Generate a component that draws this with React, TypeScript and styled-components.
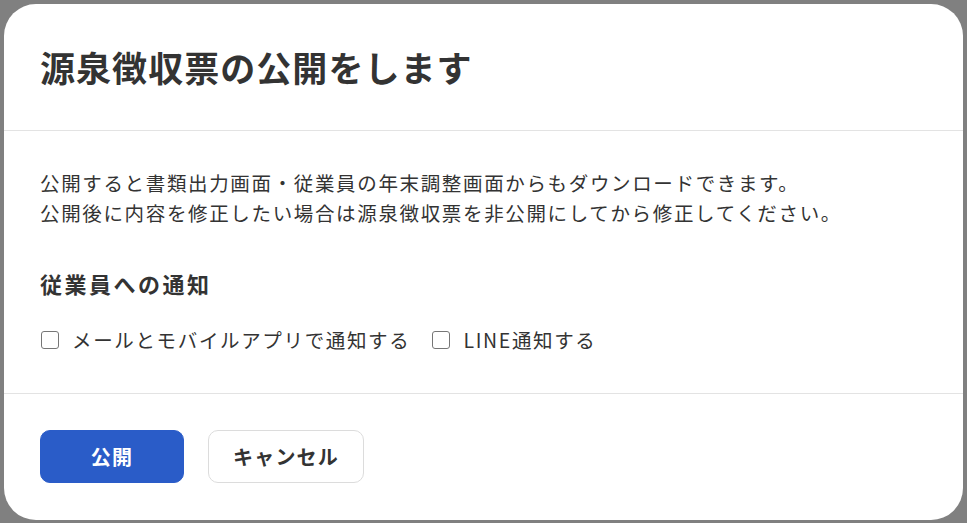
import React, { useState } from "react";
import styled, { createGlobalStyle } from "styled-components";

const GlobalStyle = createGlobalStyle`
  html, body {
    margin: 0;
    padding: 0;
    background: #808080;
  }
  body {
    font-family: "Noto Sans CJK JP", "Noto Sans", sans-serif;
    color: #333;
  }
`;

const App = () => {
  const [mail, setMail] = useState(false);
  const [line, setLine] = useState(false);
  return (
    <>
      <GlobalStyle />
      <Overlay>
        <Modal>
          <Header>
            <Title>源泉徴収票の公開をします</Title>
          </Header>
          <Body>
            <Description>
              公開すると書類出力画面・従業員の年末調整画面からもダウンロードできます。
              <br />
              公開後に内容を修正したい場合は源泉徴収票を非公開にしてから修正してください。
            </Description>
            <SectionTitle>従業員への通知</SectionTitle>
            <CheckRow>
              <CheckLabel>
                <CheckBox checked={mail} onClick={() => setMail(!mail)} />
                メールとモバイルアプリで通知する
              </CheckLabel>
              <CheckLabel>
                <CheckBox checked={line} onClick={() => setLine(!line)} />
                LINE通知する
              </CheckLabel>
            </CheckRow>
          </Body>
          <Footer>
            <Button primary>公開</Button>
            <Button>キャンセル</Button>
          </Footer>
        </Modal>
      </Overlay>
    </>
  );
};

export default App;

const Overlay = styled.div`
  width: 967px;
  height: 523px;
  padding: 4px;
  box-sizing: border-box;
  background: #808080;
`;
const Modal = styled.div`
  width: 959px;
  height: 516px;
  background: #fff;
  border-radius: 32px;
  display: flex;
  flex-direction: column;
  overflow: hidden;
`;
const Header = styled.div`
  height: 126px;
  padding: 0 36px;
  display: flex;
  align-items: center;
  border-bottom: 1px solid #e3e3e3;
`;
const Title = styled.h1`
  margin: 0;
  font-size: 35px;
  line-height: 46px;
  font-weight: 700;
  letter-spacing: 1.05px;
  color: #333;
`;
const Body = styled.div`
  padding: 37px 36px 38px;
  border-bottom: 1px solid #e3e3e3;
`;
const Description = styled.p`
  margin: 0;
  font-size: 19.5px;
  line-height: 30px;
  letter-spacing: 1.65px;
  color: #333;
`;
const SectionTitle = styled.h2`
  margin: 40px 0 0;
  font-size: 22px;
  line-height: 30px;
  font-weight: 700;
  letter-spacing: 2.5px;
  color: #333;
`;
const CheckRow = styled.div`
  display: flex;
  gap: 21px;
  margin-top: 27px;
`;
const CheckLabel = styled.label`
  display: flex;
  align-items: center;
  gap: 13px;
  font-size: 19.5px;
  line-height: 30px;
  letter-spacing: 1.65px;
  color: #333;
  cursor: pointer;
`;
const CheckBox = styled.span<{ checked: boolean }>`
  width: 18px;
  height: 18px;
  box-sizing: border-box;
  border: 1.5px solid #767676;
  border-radius: 3px;
  margin-left: 1px;
  background: ${({ checked }) => (checked ? "#2a5cc8" : "#fff")};
`;
const Footer = styled.div`
  padding: 36px 36px;
  display: flex;
  gap: 24px;
`;
const Button = styled.button<{ primary?: boolean }>`
  height: 53px;
  min-width: ${({ primary }) => (primary ? "144px" : "154px")};
  padding: 0 24px;
  border-radius: 10px;
  font-family: "Noto Sans CJK JP", "Noto Sans", sans-serif;
  font-size: 20px;
  font-weight: 700;
  letter-spacing: 0.06em;
  cursor: pointer;
  border: 1px solid ${({ primary }) => (primary ? "#2a5cc8" : "#dcdcdc")};
  background: ${({ primary }) => (primary ? "#2a5cc8" : "#fff")};
  color: ${({ primary }) => (primary ? "#fff" : "#333")};
`;
